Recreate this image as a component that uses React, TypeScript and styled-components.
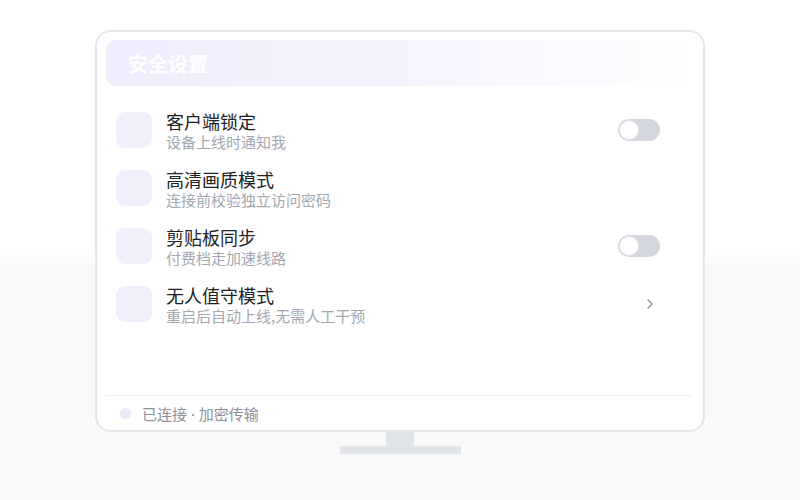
import React from "react";
import styled, { createGlobalStyle } from "styled-components";

const Global = createGlobalStyle`
  html, body { margin: 0; padding: 0; }
  body {
    font-family: "Noto Sans CJK SC", "Noto Sans", sans-serif;
    background: linear-gradient(180deg, #ffffff 0%, #ffffff 50%, #fafafb 53%, #f9f9fa 100%);
    min-height: 500px;
  }
`;

const Page = styled.div`
  height: 500px;
  display: flex;
  flex-direction: column;
  align-items: center;
  padding-top: 30px;
  box-sizing: border-box;
`;

const Monitor = styled.div`
  width: 610px;
  height: 402px;
  box-sizing: border-box;
  border: 2px solid #e4e6eb;
  border-radius: 16px;
  background: #ffffff;
  padding: 8px 11px 0 9px;
  display: flex;
  flex-direction: column;
`;

const Header = styled.div`
  height: 46px;
  border-radius: 10px;
  background: linear-gradient(90deg, #efedfd 0%, #f5f4fe 50%, #fbfbff 85%, #ffffff 100%);
  display: flex;
  align-items: center;
  padding-left: 22px;
`;

const Title = styled.div`
  color: #ffffff;
  font-size: 20px;
  font-weight: 700;
`;

const List = styled.div`
  margin-top: 15px;
  display: flex;
  flex-direction: column;
  flex: 1;
`;

const Row = styled.div`
  height: 58px;
  display: flex;
  align-items: center;
  padding: 0 32px 0 10px;
`;

const IconBox = styled.div`
  width: 36px;
  height: 36px;
  border-radius: 9px;
  background: #f1effc;
  flex-shrink: 0;
`;

const Texts = styled.div`
  flex: 1;
  margin-left: 14px;
  padding-top: 2px;
  display: flex;
  flex-direction: column;
`;

const RowTitle = styled.div`
  font-size: 18px;
  line-height: 22px;
  color: #202226;
`;

const RowSub = styled.div`
  font-size: 15px;
  line-height: 20px;
  color: #a3a7b0;
`;

const Toggle = styled.div<{ $on?: boolean }>`
  width: 42px;
  height: 22px;
  border-radius: 11px;
  background: ${(p) => (p.$on ? "#8b7cf6" : "#d5d7de")};
  position: relative;
  flex-shrink: 0;
  &::after {
    content: "";
    position: absolute;
    top: 1px;
    left: ${(p) => (p.$on ? "21px" : "1px")};
    width: 18px;
    height: 18px;
    border-radius: 50%;
    background: #ffffff;
    border: 1px solid #e1e3e8;
  }
`;

const Chevron = styled.div`
  width: 12px;
  display: flex;
  justify-content: center;
  margin-right: 4px;
  color: #8a8f99;
`;

const Footer = styled.div`
  border-top: 1px solid #eef0f3;
  height: 34px;
  display: flex;
  align-items: center;
  padding-left: 14px;
`;

const Dot = styled.div`
  width: 11px;
  height: 11px;
  border-radius: 50%;
  background: #ece8fb;
`;

const FooterText = styled.div`
  margin-left: 11px;
  font-size: 15px;
  font-family: "Noto Sans", "Noto Sans CJK SC", sans-serif;
  color: #8c9099;
`;

const Neck = styled.div`
  width: 28px;
  height: 14px;
  background: #e1e4e8;
`;

const Base = styled.div`
  width: 121px;
  height: 8px;
  background: #e1e4e8;
`;

type Item = { title: string; sub: string; right: "toggle" | "none" | "chevron" };

const items: Item[] = [
  { title: "客户端锁定", sub: "设备上线时通知我", right: "toggle" },
  { title: "高清画质模式", sub: "连接前校验独立访问密码", right: "none" },
  { title: "剪贴板同步", sub: "付费档走加速线路", right: "toggle" },
  { title: "无人值守模式", sub: "重启后自动上线,无需人工干预", right: "chevron" },
];

export default function App() {
  return (
    <>
      <Global />
      <Page>
        <Monitor>
          <Header>
            <Title>安全设置</Title>
          </Header>
          <List>
            {items.map((it) => (
              <Row key={it.title}>
                <IconBox />
                <Texts>
                  <RowTitle>{it.title}</RowTitle>
                  <RowSub>{it.sub}</RowSub>
                </Texts>
                {it.right === "toggle" && <Toggle />}
                {it.right === "chevron" && (
                  <Chevron>
                    <svg width="6" height="10" viewBox="0 0 6 10">
                      <path d="M1 1l4 4-4 4" fill="none" stroke="currentColor" strokeWidth="1.4" strokeLinecap="round" strokeLinejoin="round" />
                    </svg>
                  </Chevron>
                )}
              </Row>
            ))}
          </List>
          <Footer>
            <Dot />
            <FooterText>已连接 · 加密传输</FooterText>
          </Footer>
        </Monitor>
        <Neck />
        <Base />
      </Page>
    </>
  );
}
